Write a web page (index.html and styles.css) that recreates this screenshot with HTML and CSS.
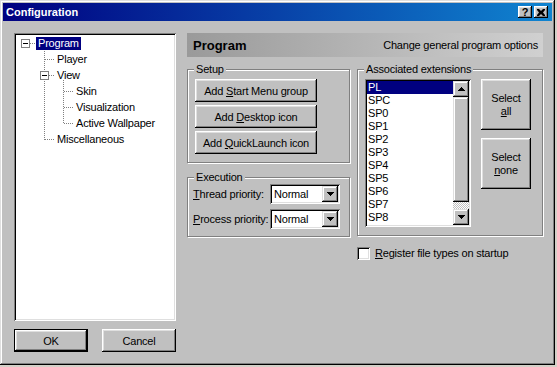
FILE: index.html
```html
<!DOCTYPE html>
<html lang="en">
<head>
    <meta charset="UTF-8">
    <meta name="viewport" content="width=device-width, initial-scale=1.0">
    <title>Configuration</title>
    <link rel="stylesheet" href="styles.css">
</head>
<body>
<div class="window">
    <div class="titlebar">
        <span class="title">Configuration</span>
        <div class="title-buttons">
            <span class="tbtn help">?</span>
            <span class="tbtn">
                <svg width="8" height="7" viewBox="0 0 8 7"><path d="M0 0h2l2 2 2-2h2v1l-2 2.5 2 2.5v1h-2l-2-2-2 2h-2v-1l2-2.5-2-2.5z" fill="#000"/></svg>
            </span>
        </div>
    </div>

    <div class="dialog">
        <!-- page tree -->
        <div class="left-col">
            <div class="tree">
                <svg class="tree-lines" width="158" height="120" viewBox="0 0 158 120">
                    <g stroke="#808080" stroke-dasharray="1 1" fill="none">
                        <path d="M14 8.5H20"/>
                        <path d="M28.5 16V105"/>
                        <path d="M29 24.5H39"/>
                        <path d="M33 40.5H39"/>
                        <path d="M47.5 45V89"/>
                        <path d="M48 56.5H58"/>
                        <path d="M48 72.5H58"/>
                        <path d="M48 88.5H58"/>
                        <path d="M29 104.5H39"/>
                    </g>
                    <g shape-rendering="crispEdges">
                        <rect x="5.5" y="4.5" width="8" height="8" fill="#fff" stroke="#808080"/>
                        <path d="M7 8.5H12" stroke="#000"/>
                        <rect x="24.5" y="36.5" width="8" height="8" fill="#fff" stroke="#808080"/>
                        <path d="M26 40.5H31" stroke="#000"/>
                    </g>
                </svg>
                <div class="tree-row lvl0"><span class="tree-label selected">Program</span></div>
                <div class="tree-row lvl1"><span class="tree-label">Player</span></div>
                <div class="tree-row lvl1"><span class="tree-label">View</span></div>
                <div class="tree-row lvl2"><span class="tree-label">Skin</span></div>
                <div class="tree-row lvl2"><span class="tree-label">Visualization</span></div>
                <div class="tree-row lvl2"><span class="tree-label">Active Wallpaper</span></div>
                <div class="tree-row lvl1"><span class="tree-label">Miscellaneous</span></div>
            </div>
            <div class="dialog-buttons">
                <button class="btn default">OK</button>
                <button class="btn">Cancel</button>
            </div>
        </div>

        <!-- page content -->
        <div class="right-col">
            <div class="page-header">
                <span class="page-title">Program</span>
                <span class="page-desc">Change general program options</span>
            </div>
            <div class="page-body">
                <div class="col-a">
                    <fieldset class="group setup">
                        <legend>Setup</legend>
                        <button class="btn wide">Add <u>S</u>tart Menu group</button>
                        <button class="btn wide">Add <u>D</u>esktop icon</button>
                        <button class="btn wide">Add <u>Q</u>uickLaunch icon</button>
                    </fieldset>
                    <fieldset class="group execution">
                        <legend>Execution</legend>
                        <div class="field-row">
                            <span><u>T</u>hread priority:</span>
                            <div class="combo"><span class="combo-text">Normal</span><span class="combo-btn"><svg width="7" height="4" viewBox="0 0 7 4"><path d="M0 0h7v1h-1v1h-1v1h-1v1h-1v-1h-1v-1h-1v-1h-1z" fill="#000"/></svg></span></div>
                        </div>
                        <div class="field-row">
                            <span><u>P</u>rocess priority:</span>
                            <div class="combo"><span class="combo-text">Normal</span><span class="combo-btn"><svg width="7" height="4" viewBox="0 0 7 4"><path d="M0 0h7v1h-1v1h-1v1h-1v1h-1v-1h-1v-1h-1v-1h-1z" fill="#000"/></svg></span></div>
                        </div>
                    </fieldset>
                </div>
                <div class="col-b">
                    <fieldset class="group extensions">
                        <legend>Associated extensions</legend>
                        <div class="ext-body">
                            <div class="listbox">
                                <div class="list-items">
                                    <div class="list-item selected">PL</div>
                                    <div class="list-item">SPC</div>
                                    <div class="list-item">SP0</div>
                                    <div class="list-item">SP1</div>
                                    <div class="list-item">SP2</div>
                                    <div class="list-item">SP3</div>
                                    <div class="list-item">SP4</div>
                                    <div class="list-item">SP5</div>
                                    <div class="list-item">SP6</div>
                                    <div class="list-item">SP7</div>
                                    <div class="list-item">SP8</div>
                                    <div class="list-item">SP9</div>
                                </div>
                                <div class="scrollbar">
                                    <span class="sb-btn"><svg width="7" height="4" viewBox="0 0 7 4"><path d="M3 0h1v1h1v1h1v1h1v1h-7v-1h1v-1h1v-1h1z" fill="#000"/></svg></span>
                                    <span class="sb-thumb"></span>
                                    <span class="sb-track"></span>
                                    <span class="sb-btn"><svg width="7" height="4" viewBox="0 0 7 4"><path d="M0 0h7v1h-1v1h-1v1h-1v1h-1v-1h-1v-1h-1v-1h-1z" fill="#000"/></svg></span>
                                </div>
                            </div>
                            <div class="select-buttons">
                                <button class="btn tall">Select<br><u>a</u>ll</button>
                                <button class="btn tall">Select<br><u>n</u>one</button>
                            </div>
                        </div>
                    </fieldset>
                    <label class="check">
                        <span class="check-box"></span>
                        <span><u>R</u>egister file types on startup</span>
                    </label>
                </div>
            </div>
        </div>
    </div>
</div>
</body>
</html>
```

FILE: styles.css
```css
body {
    margin: 0;
    background-color: #d4d0c8;
    font-family: "Liberation Sans", Arial, sans-serif;
    font-size: 11px;
    letter-spacing: -0.2px;
    color: #000;
}
u {
    text-decoration-thickness: 1px;
    text-underline-offset: 1px;
}
.window {
    width: 555px;
    height: 365px;
    box-sizing: border-box;
    padding: 3px;
    background-color: #c0c0c0;
    box-shadow: inset -1px -1px #000, inset 1px 1px #dfdfdf, inset -2px -2px #808080, inset 2px 2px #fff;
}
/* title bar */
.titlebar {
    height: 18px;
    display: flex;
    align-items: center;
    justify-content: space-between;
    padding: 0 4px 0 3px;
    background: linear-gradient(to right, #000080, #1084d0);
    color: #fff;
}
.title {
    font-weight: bold;
    letter-spacing: 0;
}
.title-buttons {
    display: flex;
    gap: 2px;
}
.tbtn {
    width: 14px;
    height: 12px;
    display: flex;
    align-items: center;
    justify-content: center;
    background-color: #c0c0c0;
    color: #000;
    box-shadow: inset -1px -1px #000, inset 1px 1px #fff, inset -2px -2px #808080, inset 2px 2px #dfdfdf;
}
.tbtn.help {
    font-weight: bold;
    font-size: 11px;
    letter-spacing: 0;
    line-height: 12px;
}
.dialog {
    display: flex;
    gap: 11px;
    padding: 12px 9px 0 11px;
}
/* tree */
.left-col {
    width: 162px;
}
.tree {
    position: relative;
    height: 288px;
    box-sizing: border-box;
    padding: 2px;
    background-color: #fff;
    box-shadow: inset 1px 1px #808080, inset -1px -1px #fff, inset 2px 2px #000, inset -2px -2px #dfdfdf;
}
.tree-lines {
    position: absolute;
    left: 2px;
    top: 2px;
}
.tree-row {
    position: relative;
    height: 16px;
    display: flex;
    align-items: center;
}
.lvl0 { padding-left: 20px; }
.lvl1 { padding-left: 39px; }
.lvl2 { padding-left: 58px; }
.tree-label {
    padding: 0 2px;
    line-height: 13px;
}
.tree-label.selected {
    background-color: #000080;
    color: #fff;
}
/* buttons */
.btn {
    font: inherit;
    letter-spacing: inherit;
    color: #000;
    background-color: #c0c0c0;
    border: none;
    padding: 0;
    box-shadow: inset -1px -1px #000, inset 1px 1px #fff, inset -2px -2px #808080, inset 2px 2px #dfdfdf;
}
.dialog-buttons {
    display: flex;
    justify-content: space-between;
    margin-top: 8px;
}
.dialog-buttons .btn {
    width: 74px;
    height: 23px;
}
.btn.default {
    border: 1px solid #000;
}
/* page */
.right-col {
    width: 356px;
}
.page-header {
    height: 24px;
    display: flex;
    align-items: center;
    justify-content: space-between;
    padding: 0 5px 0 6px;
    background: linear-gradient(to right, #9a9a9a, #d0d0d0);
}
.page-title {
    font-weight: bold;
    font-size: 13px;
    letter-spacing: 0;
}
.page-body {
    display: flex;
    gap: 7px;
    margin-top: 6px;
}
.col-a {
    width: 163px;
}
.col-b {
    width: 186px;
}
.group {
    margin: 0;
    min-width: 0;
    box-sizing: border-box;
    border: 1px solid #808080;
    box-shadow: 1px 1px 0 #fff, inset 1px 1px 0 #fff;
}
.group legend {
    padding: 0 2px;
    line-height: 13px;
    background-color: #c0c0c0;
}
.setup {
    display: flex;
    flex-direction: column;
    gap: 3px;
    padding: 3px 7px 8px 7px;
}
.setup legend {
    margin-left: -1px;
}
.btn.wide {
    width: 122px;
    height: 23px;
}
.execution {
    margin-top: 8px;
    padding: 0 9px 7px 5px;
}
.execution legend {
    margin-left: 1px;
}
.field-row {
    height: 20px;
    display: flex;
    align-items: center;
    justify-content: space-between;
}
.field-row + .field-row {
    margin-top: 5px;
}
.combo {
    width: 70px;
    height: 20px;
    box-sizing: border-box;
    padding: 2px;
    display: flex;
    align-items: center;
    justify-content: space-between;
    background-color: #fff;
    box-shadow: inset 1px 1px #808080, inset -1px -1px #fff, inset 2px 2px #000, inset -2px -2px #dfdfdf;
}
.combo-text {
    padding-left: 2px;
}
.combo-btn, .sb-btn {
    width: 16px;
    height: 16px;
    display: flex;
    align-items: center;
    justify-content: center;
    background-color: #c0c0c0;
    box-shadow: inset -1px -1px #000, inset 1px 1px #dfdfdf, inset -2px -2px #808080, inset 2px 2px #fff;
}
/* extensions */
.extensions {
    padding: 3px 10px 8px 7px;
}
.extensions legend {
    margin-left: -1px;
}
.ext-body {
    display: flex;
    gap: 10px;
}
.listbox {
    width: 106px;
    height: 148px;
    box-sizing: border-box;
    padding: 2px;
    display: flex;
    background-color: #fff;
    box-shadow: inset 1px 1px #808080, inset -1px -1px #fff, inset 2px 2px #000, inset -2px -2px #dfdfdf;
}
.list-items {
    flex: 1;
    overflow: hidden;
}
.list-item {
    height: 13px;
    line-height: 13px;
    padding-left: 1px;
}
.list-item.selected {
    background-color: #000080;
    color: #fff;
}
.scrollbar {
    width: 16px;
    display: flex;
    flex-direction: column;
}
.sb-thumb {
    height: 105px;
    background-color: #c0c0c0;
    box-shadow: inset -1px -1px #000, inset 1px 1px #dfdfdf, inset -2px -2px #808080, inset 2px 2px #fff;
}
.sb-track {
    flex: 1;
    background: repeating-conic-gradient(#c0c0c0 0 25%, #fff 0 50%) 0 0 / 2px 2px;
}
.select-buttons {
    display: flex;
    flex-direction: column;
    gap: 8px;
}
.btn.tall {
    width: 50px;
    height: 51px;
    line-height: 13px;
}
.check {
    display: flex;
    align-items: center;
    gap: 5px;
    margin-top: 11px;
    line-height: 13px;
}
.check-box {
    width: 13px;
    height: 13px;
    box-sizing: border-box;
    background-color: #fff;
    box-shadow: inset 1px 1px #808080, inset -1px -1px #fff, inset 2px 2px #000, inset -2px -2px #dfdfdf;
}
```
